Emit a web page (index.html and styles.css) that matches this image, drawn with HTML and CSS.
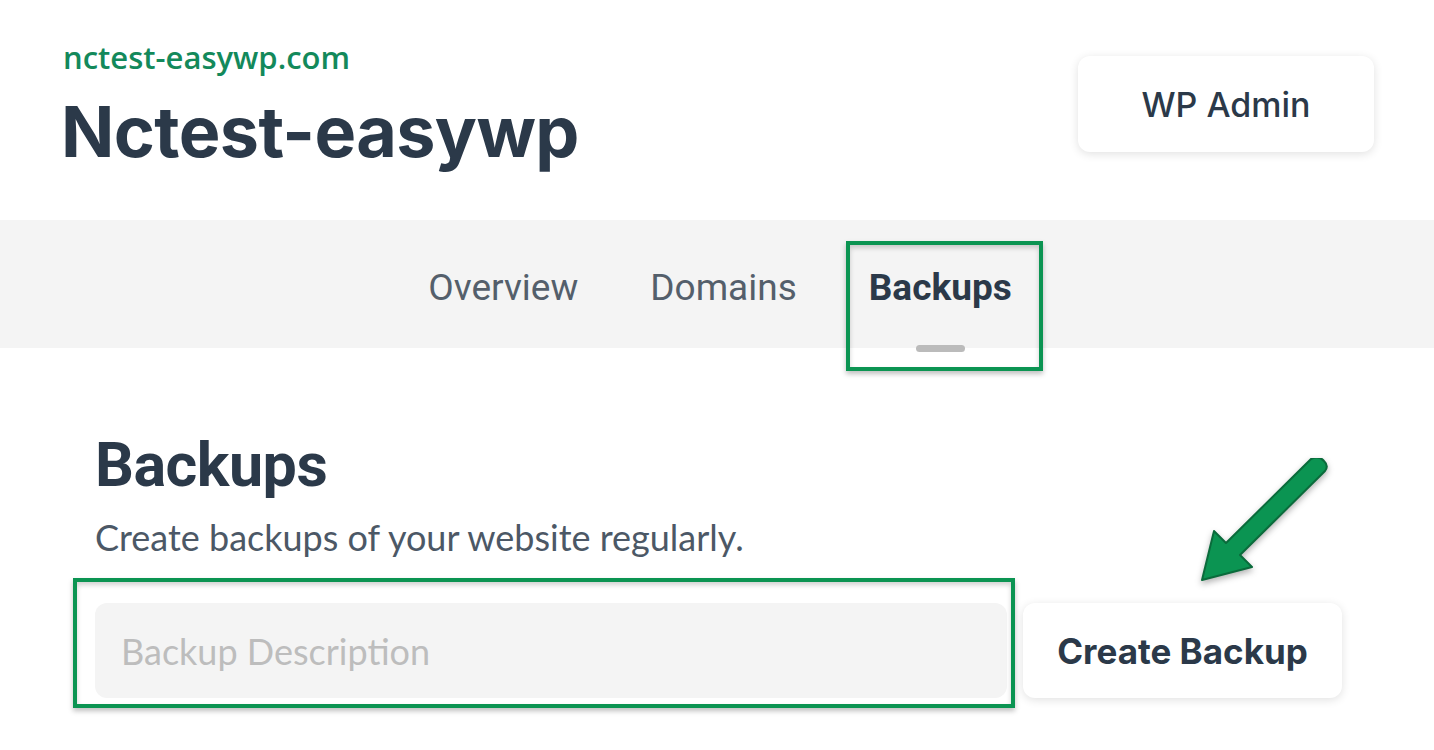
FILE: index.html
```html
<!DOCTYPE html>
<html lang="en">
<head>
    <meta charset="UTF-8">
    <meta name="viewport" content="width=device-width, initial-scale=1.0">
    <title>Nctest-easywp - Backups</title>
    <link rel="stylesheet" href="styles.css">
</head>
<body>
<header class="site-header">
    <div class="site-info">
        <div class="site-domain">nctest-easywp.com</div>
        <h1 class="site-name">Nctest-easywp</h1>
    </div>
    <a class="btn btn-admin" href="#">WP Admin</a>
</header>

<nav class="tabs">
    <a class="tab" href="#">Overview</a>
    <a class="tab" href="#">Domains</a>
    <a class="tab active" href="#">Backups<span class="note-box"></span></a>
</nav>

<main class="content">
    <h2>Backups</h2>
    <p class="lead">Create backups of your website regularly.</p>
    <div class="backup-form">
        <div class="field">
            <input type="text" placeholder="Backup Description">
            <span class="note-box"></span>
        </div>
        <button class="btn btn-create" type="button">Create Backup</button>
        <!-- pointer arrow -->
        <svg class="note-arrow" width="150" height="140" viewBox="0 0 150 140">
            <path d="M131 13 L46 97 L58 109 L8 122 L20 73 L32 85 L117 1 Q125 -3 130 3 Q135 8 131 13 Z"
                  fill="#0b9452" stroke="#0a6b3b" stroke-width="2" stroke-linejoin="round"/>
        </svg>
    </div>
</main>
</body>
</html>
```

FILE: styles.css
```css
/* Global */
body {
    margin: 0;
    padding: 0;
    background: #fff;
    font-family: 'Inter', 'Liberation Sans', sans-serif;
    color: #2b3949;
}

a {
    text-decoration: none;
    color: inherit;
}

/* Header */
.site-header {
    display: flex;
    justify-content: space-between;
    align-items: flex-start;
    padding: 40px 60px 0 63px;
    height: 180px;
}

.site-domain {
    font-family: 'Open Sans', sans-serif;
    font-size: 31px;
    font-weight: 600;
    color: #13895b;
    line-height: 34px;
}

.site-name {
    margin: 18px 0 0 -2px;
    font-size: 70px;
    font-weight: 700;
    letter-spacing: -0.6px;
    line-height: 80px;
}

.btn {
    display: flex;
    align-items: center;
    justify-content: center;
    background: #fff;
    border: none;
    border-radius: 12px;
    box-shadow: 0 2px 10px rgba(0, 0, 0, 0.12);
    color: #2b3949;
    cursor: pointer;
}

.btn-admin {
    margin-top: 16px;
    width: 296px;
    height: 96px;
    font-size: 34px;
    font-weight: 500;
}

/* Tabs */
.tabs {
    display: flex;
    justify-content: center;
    background: #f4f4f4;
    height: 128px;
    padding-left: 6px;
}

.tab {
    position: relative;
    display: flex;
    align-items: center;
    padding: 6px 36px 0;
    font-family: 'Roboto', sans-serif;
    font-size: 37px;
    color: #545f6b;
}

.tab.active {
    font-weight: 700;
    color: #2b3949;
}

.tab.active::after {
    content: '';
    position: absolute;
    left: 50%;
    bottom: -4px;
    width: 49px;
    height: 7px;
    margin-left: -24px;
    border-radius: 4px;
    background: #bbbbbb;
}

/* Annotation boxes */
.note-box {
    position: absolute;
    border: 4px solid #0b9452;
    box-shadow: 0 3px 5px rgba(0, 0, 0, 0.25), inset 0 3px 5px rgba(0, 0, 0, 0.18);
    pointer-events: none;
}

.tab .note-box {
    left: 13px;
    right: 5px;
    top: 21px;
    bottom: -23px;
}

/* Content */
.content {
    padding: 82px 0 60px 95px;
}

h2 {
    margin: 0;
    font-family: 'Roboto', sans-serif;
    font-size: 61px;
    font-weight: 700;
    line-height: 70px;
    letter-spacing: -0.5px;
}

.lead {
    margin: 17px 0 0;
    font-family: 'Lato', sans-serif;
    font-size: 36px;
    color: #4c5866;
    line-height: 40px;
}

.backup-form {
    position: relative;
    display: flex;
    gap: 16px;
    margin-top: 46px;
    width: 1247px;
}

.field {
    position: relative;
    width: 912px;
}

.field input {
    display: block;
    box-sizing: border-box;
    width: 100%;
    height: 95px;
    border: none;
    border-radius: 12px;
    background: #f4f4f4;
    padding: 0 26px;
    font-family: 'Lato', sans-serif;
    font-size: 36px;
    color: #2b3949;
    outline: none;
}

.field input::placeholder {
    color: #bdbdbd;
}

.field .note-box {
    left: -22px;
    right: -8px;
    top: -25px;
    bottom: -10px;
}

.btn-create {
    width: 319px;
    height: 95px;
    font-family: 'Inter', sans-serif;
    font-size: 35px;
    font-weight: 700;
}

.note-arrow {
    position: absolute;
    right: -2px;
    top: -145px;
    filter: drop-shadow(0 3px 3px rgba(0, 0, 0, 0.3));
}
```
